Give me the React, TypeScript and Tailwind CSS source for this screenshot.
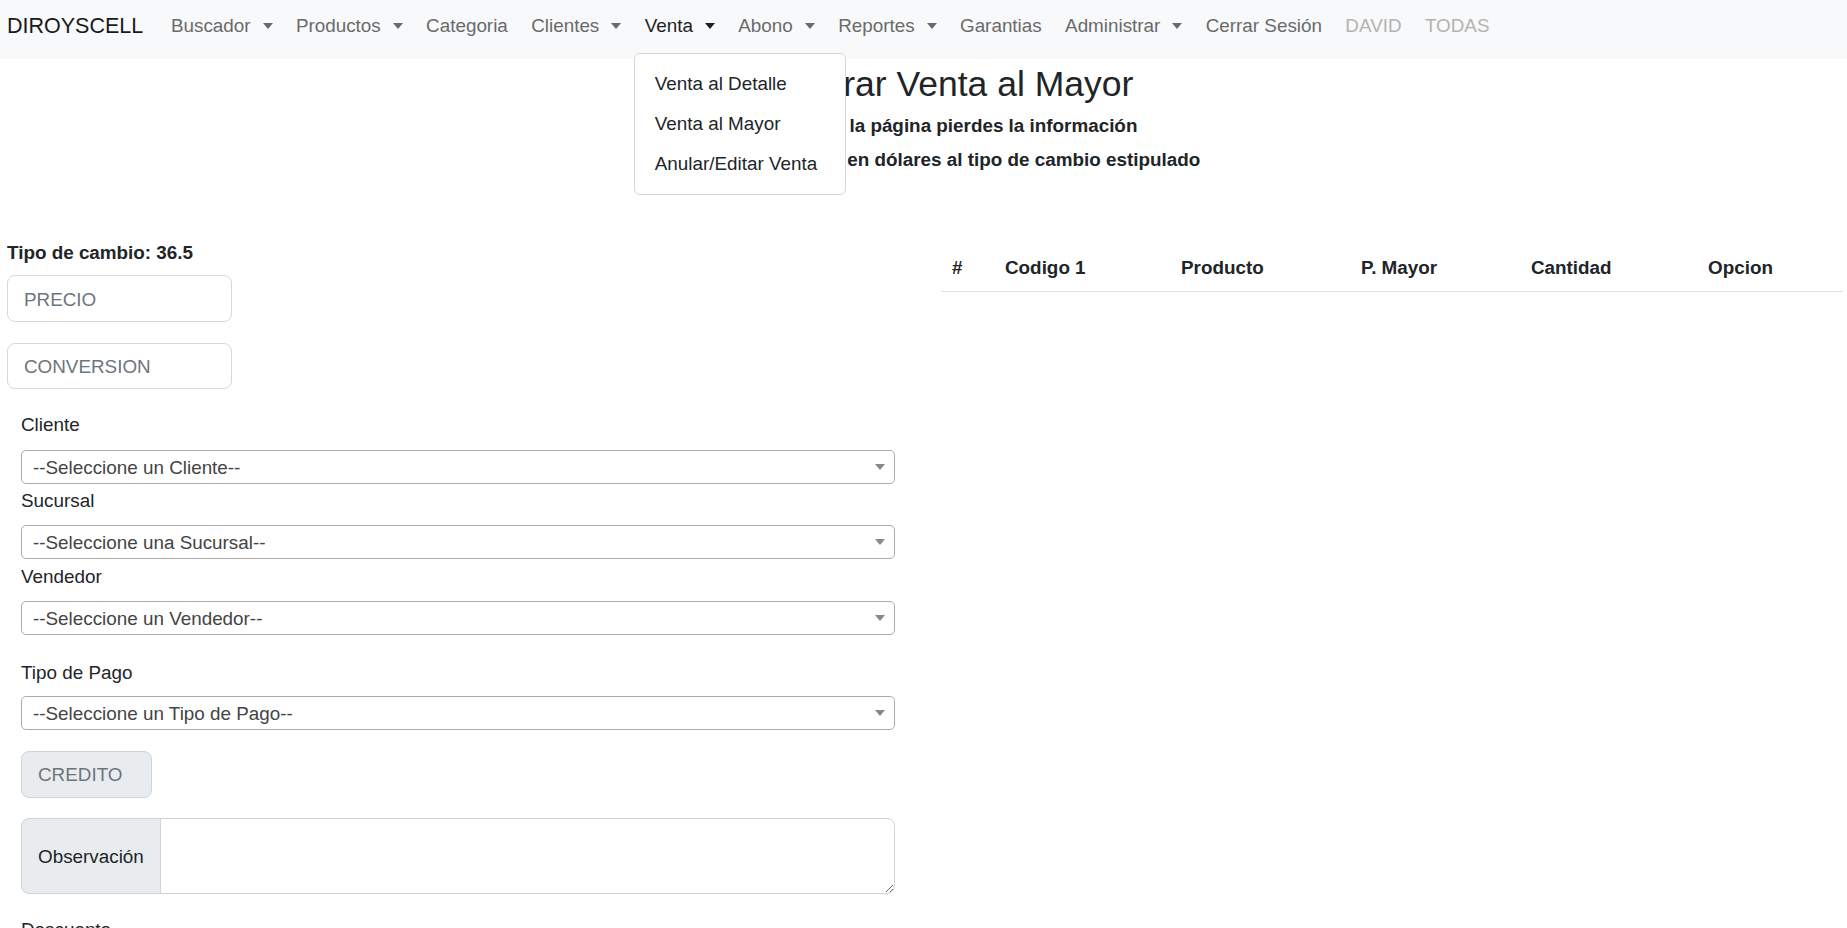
import { useState } from "react";

const navItems = [
  { label: "Buscador", caret: true },
  { label: "Productos", caret: true },
  { label: "Categoria" },
  { label: "Clientes", caret: true },
  { label: "Venta", caret: true, active: true },
  { label: "Abono", caret: true },
  { label: "Reportes", caret: true },
  { label: "Garantias" },
  { label: "Administrar", caret: true },
  { label: "Cerrar Sesión" },
  { label: "DAVID", disabled: true },
  { label: "TODAS", disabled: true },
];

const ventaMenu = ["Venta al Detalle", "Venta al Mayor", "Anular/Editar Venta"];

const columns = ["#", "Codigo 1", "Producto", "P. Mayor", "Cantidad", "Opcion"];

function Caret() {
  return (
    <span className="ml-[12px] inline-block h-0 w-0 border-x-[5.6px] border-t-[6.5px] border-x-transparent border-t-current align-middle"></span>
  );
}

function Select2({ text }: { text: string }) {
  return (
    <div className="flex h-[34px] w-full items-center justify-between rounded-[5px] border border-[#aaaaaa] bg-white pl-[11px] pr-[9px]">
      <span className="pt-[3px] text-[#444444]">{text}</span>
      <span className="h-0 w-0 border-x-[5px] border-t-[6px] border-x-transparent border-t-[#888888]"></span>
    </div>
  );
}

export default function App() {
  const [openMenu] = useState("Venta");

  return (
    <div
      className="min-h-screen bg-white text-[18.85px] text-[#212529]"
      style={{ fontFamily: '"Liberation Sans", Arial, sans-serif' }}
    >
      <nav className="flex h-[59px] items-center bg-[#f8f9fa] pl-[7px]">
        <a className="pb-[8px] text-[21.5px] leading-[30px] text-[#1a1a1a]">DIROYSCELL</a>
        <ul className="ml-[16px] flex h-full items-center">
          {navItems.map((item) => (
            <li key={item.label} className="relative flex h-full items-center pb-[7px]">
              <a
                className={`flex items-center px-[11.7px] leading-[28px] ${
                  item.disabled
                    ? "text-[#b3b3b3]"
                    : item.active
                    ? "text-[#1f1f1f]"
                    : "text-[#6a6a6a]"
                }`}
              >
                {item.label}
                {item.caret && <Caret />}
              </a>
              {openMenu === item.label && (
                <div className="absolute left-[1px] top-[53px] z-20 w-[212px] rounded-[6px] border border-[#d6d6d6] bg-white py-[10px]">
                  {ventaMenu.map((m) => (
                    <a key={m} className="flex h-[40px] items-center whitespace-nowrap px-[19.8px] text-[#212529]">
                      {m}
                    </a>
                  ))}
                </div>
              )}
            </li>
          ))}
        </ul>
      </nav>

      <div className="text-center">
        <h2 className="mt-[3px] pl-[29px] text-[35.5px] font-medium leading-[45px]">Registrar Venta al Mayor</h2>
        <p className="mt-[2px] pl-[33px] font-bold leading-[34px]">Si recargas la página pierdes la información</p>
        <p className="pl-[35px] font-bold leading-[34px]">Los precios están en dólares al tipo de cambio estipulado</p>
      </div>

      <div className="mt-[62px] grid grid-cols-2">
        <div className="pl-[7px]">
          <p className="font-bold leading-[28px]">Tipo de cambio: 36.5</p>
          <div className="mt-[8px] flex h-[47px] w-[225px] items-center rounded-[8px] border border-[#d5d9de] px-[16px] pt-[3px] text-[#6c757d]">
            PRECIO
          </div>
          <div className="mt-[21px] flex h-[46px] w-[225px] items-center rounded-[8px] border border-[#d5d9de] px-[16px] pt-[3px] text-[#6c757d]">
            CONVERSION
          </div>

          <div className="ml-[14px] w-[874px]">
            <label className="mt-[22px] block leading-[28px]">Cliente</label>
            <div className="mt-[11px]">
              <Select2 text="--Seleccione un Cliente--" />
            </div>
            <label className="mt-[3px] block leading-[28px]">Sucursal</label>
            <div className="mt-[10px]">
              <Select2 text="--Seleccione una Sucursal--" />
            </div>
            <label className="mt-[4px] block leading-[28px]">Vendedor</label>
            <div className="mt-[10px]">
              <Select2 text="--Seleccione un Vendedor--" />
            </div>
            <label className="mt-[24px] block leading-[28px]">Tipo de Pago</label>
            <div className="mt-[9px]">
              <Select2 text="--Seleccione un Tipo de Pago--" />
            </div>

            <div className="mt-[21px] flex h-[47px] w-[131px] items-center rounded-[8px] border border-[#ced4da] bg-[#e9ecef] px-[16px] pt-[2px] text-[#6c757d]">
              CREDITO
            </div>

            <div className="mt-[20px] flex h-[76px] w-full">
              <span className="flex w-[140px] items-center rounded-l-[8px] border border-[#ced4da] bg-[#e9ecef] px-[16px] pt-[2px]">
                Observación
              </span>
              <textarea className="-ml-px h-full flex-1 rounded-r-[8px] border border-[#ced4da] bg-white px-[14px] py-[7px] outline-none"></textarea>
            </div>

            <label className="mt-[22px] block leading-[28px]">Descuento</label>
          </div>
        </div>

        <div className="pl-[17.5px] pr-[4px] pt-[5px]">
          <div className="grid grid-cols-[53px_176px_180px_170px_177px_1fr] border-b border-[#dee2e6]">
            {columns.map((c) => (
              <div key={c} className="px-[11px] py-[9.5px] font-bold leading-[28px]">
                {c}
              </div>
            ))}
          </div>
        </div>
      </div>
    </div>
  );
}
